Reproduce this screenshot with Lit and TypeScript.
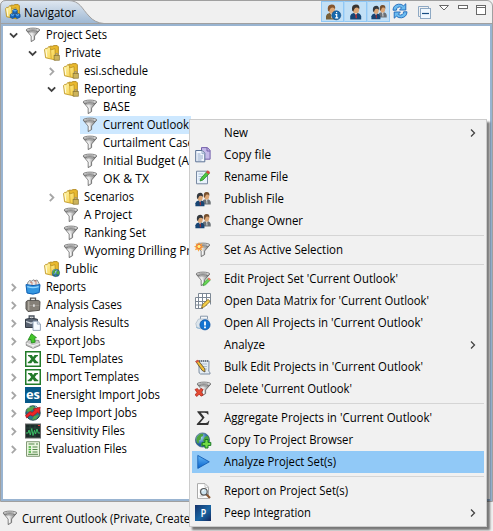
import { LitElement, html, css, svg, nothing } from "lit";
import { customElement, property } from "lit/decorators.js";
import { classMap } from "lit/directives/class-map.js";

const person = (x: number, hair: string, suit: string, tie: string) => svg`
  <g transform="translate(${x} 0)">
    <path d="M0.5 15.5V12Q1 9.5 4 9L8 9Q11 9.5 11.5 12.5V15.5Z" fill=${suit}/>
    <path d="M4.6 9L6 11L7.8 9Z" fill="#f4f2ee"/>
    <path d="M5.7 10h1.1l.4 4.2H5.9Z" fill=${tie}/>
    <ellipse cx="6.2" cy="5.4" rx="3.2" ry="4" fill="#dca777"/>
    <path d="M2.4 6.6Q1.4 .5 6.2 .4Q10.6 .5 9.5 5.2Q8.6 3.5 7 3.6Q5 3.6 4.5 5.2L3.6 7.4Z" fill=${hair}/>
  </g>`;

const people = svg`
  <g transform="translate(7 .6) scale(.76 .84)">${person(0, "#76502f", "#6d7276", "#d9dee2")}</g>
  <g transform="translate(0 1.4) scale(.82 .9)">${person(0, "#33383e", "#164574", "#b52a2b")}</g>`;

const funnel = svg`
  <path d="M1.2 3.2L6.2 9V14.6L9.6 12.6V9L14.6 3.2Z" fill="url(#steel)" stroke="#5c5c5c" stroke-width=".8"/>
  <ellipse cx="8" cy="3" rx="6.8" ry="1.9" fill="#e2e2e2" stroke="#6a6a6a" stroke-width=".8"/>
  <ellipse cx="7.7" cy="3.1" rx="4.8" ry=".9" fill="#8f8f8f"/>
  <path d="M4.4 5.8L7.3 9V12.7" fill="none" stroke="#fff" stroke-width=".8"/>`;

const folder = svg`
  <path d="M4.8 2.4L6 1.2H8.6L9.8.6H13.2L14.4 1.8V12.2L11.4 14.6 4.8 12Z" fill="#e9b92e" stroke="#a87e12" stroke-width=".8"/>
  <path d="M.5 4.6L1.6 3.4H3.4L4.6 1.6 6.6 2.8V5L11 3.6 11.6 14.9 7 14 1.6 12.8Z" fill="url(#leaf)" stroke="#b98f1d" stroke-width=".8"/>
  <path d="M6.6 5.2L7.2 13.6" stroke="#cfa12a" stroke-width=".8"/>
  <path d="M2 5.2L2.8 12" stroke="#fffce0" stroke-width="1"/>`;

const globe = svg`
  <circle cx="7.5" cy="8" r="7.1" fill="url(#sea)" stroke="#31506e" stroke-width=".6"/>
  <path d="M2 5Q4.4 1 8.2 1.8L8 4 6 5.1 5.8 7.6 3.7 8.4 4 11 2.7 11.6Q.5 8.4 2 5ZM9.4 5.5L12.4 3.6 14 6.2 13.7 9.3 11.6 12.2 10 10.2 8 8.4ZM6.4 11L8.8 12.2 7.6 14.6 6 14Z" fill="#4da43c"/>`;

const chart = svg`
  <rect x=".75" y=".75" width="14.5" height="14.5" fill="#fff" stroke="#217a28" stroke-width="1.5"/>
  <path d="M3 4H6.8L8.1 6.1 9.6 4H13V5.3H12L9.8 8 12.2 10.8H13.2V12.2H9.2L7.9 10 6.3 12.2H2.8V10.8H3.8L6.2 8 4 5.3H3Z" fill="#237a2b"/>`;

const icons: Record<string, unknown> = {
  funnel,
  view: svg`${folder}<path d="M10 5l2.3 1.2v2.6L10 10 7.7 8.8V6.2ZM7.6 9.2L10 10.4v2.8l-2.4 1.3-2.4-1.3v-2.8ZM12.4 9.2l2.7 1.2v2.8l-2.7 1.3-2.3-1.3v-2.8Z" fill="#1769c1" stroke="#0b418b" stroke-width=".6"/><path d="M8.4 6.3l1.6.7 1.6-.7M6 10.6l1.6.7 1.6-.7M10.8 10.6l1.6.7 1.6-.7" stroke="#72c2ff" fill="none"/>`,
  private: svg`${folder}<path d="M11.2 10.7V9.4q1.6-1.8 3 0v1.3" fill="none" stroke="#8c8c8c"/><rect x="10.1" y="10.6" width="5.2" height="4.6" fill="#cdb45c" stroke="#887432" stroke-width=".7"/>`,
  public: svg`${folder}<g transform="translate(7.8 7.6) scale(.54)">${globe}</g>`,
  reports: svg`<path d="M2.5 4l2-2.5 2.2.7L8 .8l2 .8 2.1-.6 2 3.5v4h-11Z" fill="#e5e7e8" stroke="#666" stroke-width=".7"/><path d="M5 3.2h2v4m2-5.2h2v5" fill="none" stroke="#b95b48" stroke-width=".7"/><path d="M1 5.6Q8 7.6 15 5.6L14.2 13.6Q8 16.5 2 14Z" fill="#3597e0" stroke="#0d5fb4"/><path d="M2.3 7.6Q8 9.6 13.6 7.6" stroke="#93d6ff" stroke-width="1.3" fill="none"/>`,
  case: svg`<path d="M5.5 4V1.2H10.5V4" fill="none" stroke="#555" stroke-width="1.3"/><path d="M1 4.8L2.8 3.4H13.2L15 4.5 14.5 13.3 3 14.5 1 12Z" fill="#858078" stroke="#56534f"/><path d="M3.8 4.2V13.5" stroke="#c1bcb3"/><path d="M4 8.5H14.2" stroke="#a39e96" stroke-width=".7"/><rect x="8" y="7.4" width="1.8" height="2.4" fill="#ddd"/>`,
  result: svg`<path d="M4.2 3.5V1H9v2.5" fill="none" stroke="#48505b" stroke-width="1.3"/><path d="M.5 4.3Q6.5 2 12.5 4.3V12.5H.5Z" fill="#586270" stroke="#353c46"/><path d="M1 6.5L6 8.2 12 6.5" stroke="#d1d8df" fill="none" stroke-width="1.3"/><path d="M8 6.2h4.6l2.8 2.7v6.5H8Z" fill="#f7fbff" stroke="#8799af" stroke-width=".9"/><path d="M12.3 6.4v2.7H15" fill="none" stroke="#8799af" stroke-width=".8"/>`,
  export: svg`<path d="M1.2 9.2L4.5 6.5 13.8 7.5 15 12.4 8 15.3 1.3 12.4Z" fill="#c9c9c9" stroke="#777" stroke-width=".8"/><path d="M1.4 10.2L8 12.8 14.8 10.5M8 12.8v2" stroke="#f7f7f7" fill="none"/><path d="M6.5 .7L11.5 4.7 9.6 5.2 10.2 9.2 6.5 10 5.8 6.4 3.2 6.8Z" fill="#43c62b" stroke="#21871a" stroke-width=".8"/>`,
  excel: chart,
  es: svg`<rect width="16" height="16" fill="#075989"/><text x="1" y="12" textLength="14" lengthAdjust="spacingAndGlyphs" class="es">es</text>`,
  peep: svg`<circle cx="8" cy="8" r="7.2" fill="#26788c" stroke="#254b4d"/><path d="M3 3L8 1 10 3 7 5 4 7 1.4 6ZM9 11l5-1-3 4-4 1Z" fill="#58a64b"/><path d="M1.5 3.5L5 1.6M10 1.6l3 1.8" stroke="#cfe6dc" stroke-width=".9"/><path d="M.6 10.4L5 6.6 7.2 7.4 9.6 5.1 8.2 4 15.2 2.2 14.4 8.8 12.6 7.3 8 11.2 5.2 10 1.6 13Z" fill="#ed2525" stroke="#9c1421" stroke-width=".7"/>`,
  monitor: svg`<rect x=".5" y="1" width="15" height="14" fill="#1c2c29" stroke="#666"/><path d="M1 5H15M1 10H15M5 1V15M10 1V15" stroke="#365447" stroke-width=".6"/><path d="M1 10H3L4 7 5.3 12 6.8 5.5 8 12.5 9.5 7.2 10.5 11 12 6 13.2 10H15" stroke="#3bc768" stroke-width=".9" fill="none"/><path d="M13 2.5h2" stroke="#df3838"/>`,
  form: svg`<path d="M1.5 .7H14.5V15.3H1.5Z" fill="#eaf6df" stroke="#839977"/><path d="M3.5 3H9.5M11 3h2M7.5 6H12.5M7.5 8.5H12.5M7.5 11H12.5M3 13.3H13" stroke="#54844b"/><path d="M3.6 6h2.4M3.6 8.5h2.4M3.6 11h2.4" stroke="#43ae37" stroke-width="1.4"/>`,
  info: svg`${person(.5, "#85562f", "#77613b", "#e8e4dc")}<circle cx="11.3" cy="11.3" r="4.5" fill="#1768ad" stroke="#174c82" stroke-width=".6"/><path d="M10.3 10.7h1.4v3m-1.5.2h3M11 8.7h1.2" stroke="#fff" stroke-width="1.2" fill="none"/>`,
  user: svg`<g transform="translate(1.7 0)">${person(0, "#3a3430", "#164676", "#d82d2a")}</g>`,
  people,
  refresh: svg`<path d="M1 7.2Q1.2 2 6.4 1.2Q9.4.8 11.6 2.8L13.8.8V7H7.6L9.7 4.7Q7.8 3.2 5.8 4.4Q4.5 5.2 4.4 7.2Z" fill="#6cbcf0" stroke="#1d67b8" stroke-width=".9"/><path d="M15 8.8Q14.8 14 9.6 14.8Q6.6 15.2 4.4 13.2L2.2 15.2V9H8.4L6.3 11.3Q8.2 12.8 10.2 11.6Q11.5 10.8 11.6 8.8Z" fill="#6cbcf0" stroke="#1d67b8" stroke-width=".9"/>`,
  collapse: svg`<path d="M1.5 11.5V1.5H11.5V4M1.5 11.5H4" fill="none" stroke="#8ea9c4"/><rect x="3.5" y="3.5" width="10" height="10" fill="#eff8ff" stroke="#8ea9c4"/><path d="M5 8.5h7" stroke="#174e83" stroke-width="1.2"/>`,
  copy: svg`<path d="M6.5.6h6l2.6 2.8v8.8H6.5Z" fill="#c4b9e8" stroke="#7561ab"/><path d="M12 1v3h3" fill="none" stroke="#7561ab"/><path d="M.7 3.5h6.5l2.6 2.7v8.6H.7Z" fill="#f3f8ff" stroke="#5a7194"/><path d="M7 4v2.7h2.8M2.5 7h3M2.5 9h5.5M2.5 11h5.5M2.5 13h4" stroke="#93a8c8" fill="none"/>`,
  rename: svg`<path d="M1.5 2.2H12.5V14.8H1.5Z" fill="#e9f2fc" stroke="#7889a2"/><path d="M3.5 5H8M3.5 7.5H7M3.5 10H6" stroke="#acc0d9"/><path d="M5 12l1.2-3L12 2.4l2.4 2L8 11Z" fill="#4fc642" stroke="#248b27" stroke-width=".8"/><path d="M11 3.3L12.8 1.2 15.2 3.3 13.4 5.3Z" fill="#d94841"/>`,
  active: svg`${funnel}<path d="M4-.2L5 2.2 7.7 1.3 6.6 3.8 8.8 5 6.4 6.2 7.4 8.6 4.6 7.6 3.6 9.8 2.5 7.5-.1 8.2 1 5.8-1 4.5 1.4 3.5.5 1.2 3 2.2Z" fill="#f8a640"/><circle cx="4" cy="4.5" r="2.1" fill="#fff47a" stroke="#ee5a34" stroke-width=".8"/>`,
  edit: svg`${funnel}<path d="M8 14.8L8.7 12 13.2 7.2 15.4 9 10.7 13.7Z" fill="#67d453" stroke="#269229" stroke-width=".6"/><path d="M12.5 8L13.9 6.4 15.8 8.2 14.5 9.6Z" fill="#ed7461"/>`,
  matrix: svg`<path d="M3.5.6H15.2V12H12V15.2H.6V4.2H3.5Z" fill="#fff"/><path d="M3.5.5H15.5V11.5M3.5.5V15.5M7.5.5V15.5M11.5.5V12M.5 4.5H15.5M.5 8.5H15.5M.5 12H12M.5 15.5H8M.5 4.5V15.5" stroke="#7d8895" fill="none"/><path d="M6.5 15l1-3.4L13 6.4l2.2 2L9.8 13.6Z" fill="#f5ce48" stroke="#7a611f" stroke-width=".8"/>`,
  openall: svg`<path d="M5.5 1.2h7v10h-7Z" fill="#f4f6f8" stroke="#8998ab"/><path d="M.8 8.5L3.5 4H13V13H2Z" fill="#dce5ec" stroke="#aebdca" stroke-width=".8"/><path d="M1 12Q5 15 12 13" stroke="#90b8d6" fill="none"/><circle cx="10" cy="9.8" r="5.1" fill="#1474d1" stroke="#0d4f9e" stroke-width=".7"/><path d="M10 6.5v4M10 11.6v1.7" stroke="#fff" stroke-width="1.8"/>`,
  bulk: svg`<path d="M4 2H14L13.8 12.5Q15.5 13 15 15H5.5Q3.6 14.5 4 12Z" fill="#e4ecf3" stroke="#7d8da0"/><path d="M6.5 5H12M6.5 7.5H12M6.5 10H12" stroke="#adbdca"/><path d="M4 2h10" stroke="#59626c" stroke-width="1.3" stroke-dasharray="1 1"/><path d="M.8 2.5L3 1.2 9.8 9.8 10 13 7.2 11.5Z" fill="#f0bd34" stroke="#4a4130" stroke-width=".8"/><path d="M.3 2.4L2.8.8 4 2.3 1.7 4Z" fill="#da5542"/>`,
  delete: svg`<g transform="translate(1 0)">${funnel}</g><path d="M0 8.5L2.4 7.5 4 9.5 6 7.4 8.2 8.6 6.3 11.2 8.3 14 6 15.2 4.1 13 2 15.5.1 14 2 11.4Z" fill="#e54b32" stroke="#a82118" stroke-width=".7"/>`,
  sigma: svg`<path d="M2.3 1.2H13.2L13.6 4.5H12.8Q12.2 2.7 9.8 2.7H5.8L9.6 7.6 5 13H11Q13 12.8 13.7 10.7H14.4L13.2 15H1.8V14L7.2 8.1 2.3 2Z" fill="#333"/>`,
  browser: svg`${globe}<path d="M10 7.5h3v2.9h2.8v3H13v2.6h-3v-2.6H7.2v-3H10Z" fill="#74dc46" stroke="#187a24"/>`,
  play: svg`<path d="M2.8 1.4L14.3 7.8 2.8 14.4Z" fill="url(#play)" stroke="#155eb3" stroke-width=".9"/>`,
  report: svg`<path d="M2.5.6H10l3.5 3.5v11.3h-11Z" fill="#fff" stroke="#aaa"/><path d="M10 1v3.4h3.5M4.5 7h3M4.5 9h2M4.5 13h4" stroke="#c1c1c1" fill="none"/><path d="M11 11L15 15" stroke="#8b5833" stroke-width="2.2"/><circle cx="8.9" cy="8.8" r="3.3" fill="#cce3ef" stroke="#555" stroke-width="1.2"/><path d="M7.1 8.5q.6-1.6 2-1.4" stroke="#fff" fill="none"/>`,
  p: svg`<rect width="16" height="16" fill="url(#pbox)"/><text x="6" y="11.6" textLength="5" lengthAdjust="spacingAndGlyphs" class="p">P</text>`,
};

@customElement("nav-icon")
class NavIcon extends LitElement {
  @property() name = "";
  static styles = css`
    :host { display: block; width: 16px; height: 16px; flex: none; }
    svg { display: block; overflow: visible; }
    .es { font: bold 13px "Open Sans", sans-serif; fill: #fff; }
    .p { font: bold 10px "Liberation Sans", sans-serif; fill: #fff; }
  `;
  render() {
    return html`<svg width="16" height="16" viewBox="0 0 16 16">
      <defs>
        <linearGradient id="steel"><stop stop-color="#6c6c6c"/><stop offset=".42" stop-color="#eee"/><stop offset="1" stop-color="#686868"/></linearGradient>
        <linearGradient id="leaf" x2="1" y2="1"><stop stop-color="#fff6ae"/><stop offset="1" stop-color="#f6cc3c"/></linearGradient>
        <radialGradient id="sea" cx=".35" cy=".3"><stop stop-color="#b7e4fa"/><stop offset="1" stop-color="#205f9e"/></radialGradient>
        <linearGradient id="play" x2="0" y2="1"><stop stop-color="#65b7f6"/><stop offset="1" stop-color="#0863cd"/></linearGradient>
        <linearGradient id="pbox" x2="1" y2="1"><stop stop-color="#17346b"/><stop offset=".55" stop-color="#1966a4"/><stop offset="1" stop-color="#13265c"/></linearGradient>
      </defs>${icons[this.name]}
    </svg>`;
  }
}

/** Text that is tracked to an exact advance width. */
@customElement("fit-text")
class FitText extends LitElement {
  @property() text = "";
  @property({ type: Number }) width = 0;
  static styles = css`
    :host { display: block; white-space: pre; flex: none; }
    svg { display: block; overflow: visible; }
    text { font: 12px "Open Sans", "Noto Sans", sans-serif; fill: #000; }
  `;
  render() {
    return html`<svg width=${this.width} height="18"><text x="0" y="13" textLength=${this.width} lengthAdjust="spacingAndGlyphs">${this.text}</text></svg>`;
  }
}

type Node = [depth: number, state: "open" | "closed" | "", icon: string, text: string, width: number];
const tree: Node[] = [
  [0, "open", "funnel", "Project Sets", 61],
  [1, "open", "private", "Private", 36],
  [2, "closed", "private", "esi.schedule", 64],
  [2, "open", "private", "Reporting", 52],
  [3, "", "funnel", "BASE", 27],
  [3, "", "funnel", "Current Outlook", 86],
  [3, "", "funnel", "Curtailment Case", 91],
  [3, "", "funnel", "Initial Budget (A", 86],
  [3, "", "funnel", "OK & TX", 46],
  [2, "closed", "private", "Scenarios", 50],
  [2, "", "funnel", "A Project", 48],
  [2, "", "funnel", "Ranking Set", 62],
  [2, "", "funnel", "Wyoming Drilling Pr", 107],
  [1, "", "public", "Public", 33],
  [0, "closed", "reports", "Reports", 40],
  [0, "closed", "case", "Analysis Cases", 76],
  [0, "closed", "result", "Analysis Results", 83],
  [0, "closed", "export", "Export Jobs", 59],
  [0, "closed", "excel", "EDL Templates", 77],
  [0, "closed", "excel", "Import Templates", 93],
  [0, "closed", "es", "Enersight Import Jobs", 114],
  [0, "closed", "peep", "Peep Import Jobs", 91],
  [0, "closed", "monitor", "Sensitivity Files", 79],
  [0, "closed", "form", "Evaluation Files", 81],
];

type Item = { icon?: string; text: string; width: number; sub?: boolean; on?: boolean } | null;
const menu: Item[] = [
  { text: "New", width: 24, sub: true },
  { icon: "copy", text: "Copy file", width: 47 },
  { icon: "rename", text: "Rename File", width: 64 },
  { icon: "people", text: "Publish File", width: 60 },
  { icon: "people", text: "Change Owner", width: 79 },
  null,
  { icon: "active", text: "Set As Active Selection", width: 119 },
  null,
  { icon: "edit", text: "Edit Project Set 'Current Outlook'", width: 174 },
  { icon: "matrix", text: "Open Data Matrix for 'Current Outlook'", width: 205 },
  { icon: "openall", text: "Open All Projects in 'Current Outlook'", width: 199 },
  { text: "Analyze", width: 41, sub: true },
  { icon: "bulk", text: "Bulk Edit Projects in 'Current Outlook'", width: 199 },
  { icon: "delete", text: "Delete 'Current Outlook'", width: 128 },
  null,
  { icon: "sigma", text: "Aggregate Projects in 'Current Outlook'", width: 208 },
  { icon: "browser", text: "Copy To Project Browser", width: 129 },
  { icon: "play", text: "Analyze Project Set(s)", width: 112, on: true },
  null,
  { icon: "report", text: "Report on Project Set(s)", width: 124 },
  { icon: "p", text: "Peep Integration", width: 87, sub: true },
];

@customElement("app-root")
class AppRoot extends LitElement {
  static styles = css`
    :host { display: block; position: relative; width: 493px; height: 531px; overflow: hidden; background: #f0f0f0; }
    svg { display: block; }
    .panel { display: flex; flex-direction: column; box-sizing: border-box; height: 502px; border: 1px solid #a0a0a0; border-radius: 6px 6px 0 0; }
    .bar { display: flex; height: 23px; }
    .tab { display: grid; flex: none; width: 104px; height: 23px; }
    .tab > * { grid-area: 1 / 1; }
    .tab-shape { margin: -1px 0 0 -1px; }
    .tab-label { display: flex; padding: 3px 0 0 4px; gap: 3px; }
    .tools { display: flex; margin-left: auto; }
    .toggle { box-sizing: border-box; width: 23px; height: 21px; border: 1px solid #90c8f6; background: #c2e0f6; padding: 2px 0 0 3px; }
    .toggle + .toggle { border-left-color: #aed6f6; }
    .refresh { margin: 2px 0 0 2px; }
    .collapse { margin: 4px 0 0 9px; }
    .controls { margin: 2px 6px 0 5px; }
    .body { flex: 1; box-sizing: border-box; border: 2px solid #99b4d1; box-shadow: 0 -1px #a0a0a0; background: #fff; overflow: hidden; padding: 0 0 0 3px; }
    .node { display: flex; height: 18px; align-items: center; }
    .d1 { padding-left: 19px; } .d2 { padding-left: 38px; } .d3 { padding-left: 57px; }
    .chev { width: 14px; height: 16px; flex: none; margin-right: 5px; }
    .cell { display: flex; align-items: center; height: 18px; gap: 5px; }
    .sel .cell { background: #cde8ff; box-shadow: -2px 0 #cde8ff; padding-right: 2px; }
    .status { display: flex; gap: 4px; padding: 8px 0 0 2px; }
    .menu { position: absolute; left: 189px; top: 119px; box-sizing: border-box; width: 298px; height: 408px; border: 1px solid #ccc; padding: 2px; background: #f1f1f1; box-shadow: 3px 3px 2px rgba(0,0,0,.5); }
    .item { display: flex; align-items: center; height: 22px; }
    .on { background: #91c9f7; }
    .slot { width: 16px; margin: 0 13px 0 3px; flex: none; }
    .arrow { margin-left: auto; margin-right: 7px; }
    .sep { height: 7px; box-sizing: border-box; margin-left: 28px; border-top: 3px solid transparent; background: linear-gradient(#d5d5d5, #d5d5d5) 0 0 / 100% 1px no-repeat; }
  `;

  private chevron(state: string) {
    return html`<svg class="chev" viewBox="0 0 14 16">
      ${state === "open"
        ? svg`<path d="M4 6.3L7.6 9.9 11.2 6.3" fill="none" stroke="#404040" stroke-width="1.8"/>`
        : state === "closed"
          ? svg`<path d="M5.8 5L9.4 8.6 5.8 12.2" fill="none" stroke="#a6a6a6" stroke-width="1.8"/>`
          : nothing}
    </svg>`;
  }

  render() {
    return html`
      <section class="panel">
        <header class="bar">
          <div class="tab">
            <svg class="tab-shape" width="106" height="25">
              <defs><linearGradient id="tab" x2="0" y2="1"><stop stop-color="#dfe7f0"/><stop offset="1" stop-color="#99b4d1"/></linearGradient></defs>
              <path d="M.5 25V6Q.5 .5 6 .5H68C80 .5 82 9 89 16Q95 23 104 23.5V25Z" fill="url(#tab)" stroke="#a0a0a0"/>
            </svg>
            <div class="tab-label"><nav-icon name="view"></nav-icon><fit-text text="Navigator" width="52"></fit-text></div>
          </div>
          <div class="tools">
            <div class="toggle"><nav-icon name="info"></nav-icon></div>
            <div class="toggle"><nav-icon name="user"></nav-icon></div>
            <div class="toggle"><nav-icon name="people"></nav-icon></div>
            <nav-icon class="refresh" name="refresh"></nav-icon>
            <nav-icon class="collapse" name="collapse"></nav-icon>
            <svg class="controls" width="48" height="14" fill="#fff" stroke="#686868">
              <path d="M1.5 2.5H10.5L6 7Z"/><rect x="20.5" y="2.5" width="9" height="3"/>
              <rect x="38.5" y="2.5" width="9" height="9"/><path d="M38 4.5H48"/>
            </svg>
          </div>
        </header>
        <main class="body">
          ${tree.map(([depth, state, icon, text, width]) => html`
            <div class=${classMap({ node: true, ["d" + depth]: true, sel: text === "Current Outlook" })}>
              ${this.chevron(state)}
              <div class="cell"><nav-icon name=${icon}></nav-icon><fit-text text=${text} width=${width}></fit-text></div>
            </div>`)}
        </main>
      </section>
      <footer class="status"><nav-icon name="funnel"></nav-icon><fit-text text="Current Outlook (Private, Create" width="168"></fit-text></footer>
      <nav class="menu">
        ${menu.map((m) => m === null
          ? html`<div class="sep"></div>`
          : html`<div class=${classMap({ item: true, on: !!m.on })}>
              <div class="slot">${m.icon ? html`<nav-icon name=${m.icon}></nav-icon>` : nothing}</div>
              <fit-text text=${m.text} width=${m.width}></fit-text>
              ${m.sub ? html`<svg class="arrow" width="8" height="10"><path d="M2 1.5L5.5 5 2 8.5" fill="none" stroke="#444" stroke-width="1.3"/></svg>` : nothing}
            </div>`)}
      </nav>`;
  }
}
